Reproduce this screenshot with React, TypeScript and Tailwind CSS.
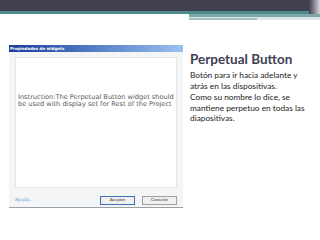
export default function App() {
  return (
    <div className="w-[320px] h-[240px] bg-white overflow-hidden" style={{ fontFamily: "Lato, 'Open Sans', sans-serif" }}>
      {/* header band */}
      <div className="h-[11px] bg-[#40404f] relative">
        <div className="absolute right-0 top-0 w-[11px] h-[14px] bg-gradient-to-r from-[#40404f] via-[#8a8a96] to-[#d6d6dc]" />
      </div>
      <div className="h-[3px] bg-[#4e8a8b] w-[309px]" />
      <div className="h-[7px] pl-[189px]">
        <div className="h-[3px] bg-[#7fa8aa]" />
        <div className="h-[1px] bg-[#d4e3e3]" />
        <div className="h-[2px] bg-[#dde9e9]">
          <div className="h-[2px] w-[68px] bg-[#a4bfc1]" />
        </div>
      </div>

      <div className="flex mt-[24px]">
        {/* dialog */}
        <div className="ml-[9px] w-[174px] h-[163px] bg-[#f4f5f7] border-b border-[#9aa0a8] flex flex-col">
          <div className="h-[7px] bg-gradient-to-r from-[#1c3c9c] to-[#9cc2f0] flex items-center px-[1px]">
            <span className="text-[4px] leading-none font-bold text-white" style={{ fontFamily: "Tahoma, 'DejaVu Sans', sans-serif" }}>Propiedades de widgets</span>
          </div>
          <div className="mx-[6px] mt-[5px] h-[131px] bg-white border border-[#e4e6ea] pt-[36px]">
            <p className="px-[2px] text-[6.6px] leading-[6.5px] text-[#5a5a5a] whitespace-nowrap" style={{ fontFamily: "'DejaVu Sans', sans-serif" }}>
              Instruction:The Perpetual Button widget should
              <br />
              be used with display set for Rest of the Project
            </p>
          </div>
          <div className="flex items-center mt-[8px] px-[6px]">
            <span className="text-[4.5px] text-[#6d9bd6]" style={{ fontFamily: "Tahoma, 'DejaVu Sans', sans-serif" }}>Ayuda...</span>
            <div className="flex-1" />
            <div className="w-[35px] h-[9px] border border-[#3c6fb4] bg-[#f0f0f0] flex items-center justify-center text-[4.5px] text-[#333]">Aceptar</div>
            <div className="ml-[7px] w-[35px] h-[9px] border border-[#a0a0a0] bg-[#f0f0f0] flex items-center justify-center text-[4.5px] text-[#333]">Cancelar</div>
          </div>
        </div>

        {/* text */}
        <div className="ml-[7px] w-[118px]">
          <div className="text-[13.5px] leading-[14px] font-bold text-[#3f4052] mt-[7px] whitespace-nowrap">Perpetual Button</div>
          <div className="mt-[4px] text-[8.3px] leading-[10.5px] text-[#222]">
            <p>Botón para ir hacia adelante y atrás en las dispositivas.</p>
            <p className="mt-[1px]">Como su nombre lo dice, se mantiene perpetuo en todas las diapositivas.</p>
          </div>
        </div>
      </div>
    </div>
  );
}
